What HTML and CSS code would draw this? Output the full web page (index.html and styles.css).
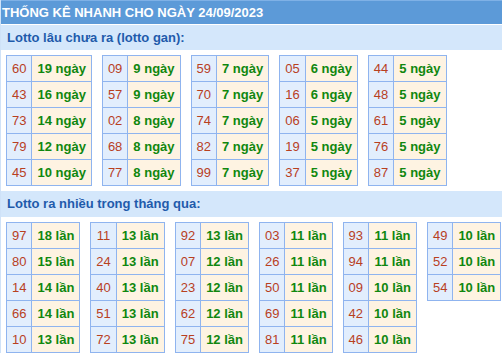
FILE: index.html
```html
<!DOCTYPE html>
<html lang="vi">
<head>
<meta charset="utf-8">
<title>Thống kê nhanh</title>
<link rel="stylesheet" href="styles.css">
</head>
<body>
<div class="box">
  <div class="title">THỐNG KÊ NHANH CHO NGÀY 24/09/2023</div>
  <div class="sec">Lotto lâu chưa ra (lotto gan):</div>
  <div class="tables">
    <table><tr><td class="n">60</td><td class="v">19 ngày</td></tr><tr><td class="n">43</td><td class="v">16 ngày</td></tr><tr><td class="n">73</td><td class="v">14 ngày</td></tr><tr><td class="n">79</td><td class="v">12 ngày</td></tr><tr><td class="n">45</td><td class="v">10 ngày</td></tr></table>
    <table><tr><td class="n">09</td><td class="v">9 ngày</td></tr><tr><td class="n">57</td><td class="v">9 ngày</td></tr><tr><td class="n">02</td><td class="v">8 ngày</td></tr><tr><td class="n">68</td><td class="v">8 ngày</td></tr><tr><td class="n">77</td><td class="v">8 ngày</td></tr></table>
    <table><tr><td class="n">59</td><td class="v">7 ngày</td></tr><tr><td class="n">70</td><td class="v">7 ngày</td></tr><tr><td class="n">74</td><td class="v">7 ngày</td></tr><tr><td class="n">82</td><td class="v">7 ngày</td></tr><tr><td class="n">99</td><td class="v">7 ngày</td></tr></table>
    <table><tr><td class="n">05</td><td class="v">6 ngày</td></tr><tr><td class="n">16</td><td class="v">6 ngày</td></tr><tr><td class="n">06</td><td class="v">5 ngày</td></tr><tr><td class="n">19</td><td class="v">5 ngày</td></tr><tr><td class="n">37</td><td class="v">5 ngày</td></tr></table>
    <table><tr><td class="n">44</td><td class="v">5 ngày</td></tr><tr><td class="n">48</td><td class="v">5 ngày</td></tr><tr><td class="n">61</td><td class="v">5 ngày</td></tr><tr><td class="n">76</td><td class="v">5 ngày</td></tr><tr><td class="n">87</td><td class="v">5 ngày</td></tr></table>
  </div>
  <div class="sec sec2">Lotto ra nhiều trong tháng qua:</div>
  <div class="tables">
    <table><tr><td class="n">97</td><td class="v">18 lần</td></tr><tr><td class="n">80</td><td class="v">15 lần</td></tr><tr><td class="n">14</td><td class="v">14 lần</td></tr><tr><td class="n">66</td><td class="v">14 lần</td></tr><tr><td class="n">10</td><td class="v">13 lần</td></tr></table>
    <table><tr><td class="n">11</td><td class="v">13 lần</td></tr><tr><td class="n">24</td><td class="v">13 lần</td></tr><tr><td class="n">40</td><td class="v">13 lần</td></tr><tr><td class="n">51</td><td class="v">13 lần</td></tr><tr><td class="n">72</td><td class="v">13 lần</td></tr></table>
    <table><tr><td class="n">92</td><td class="v">13 lần</td></tr><tr><td class="n">07</td><td class="v">12 lần</td></tr><tr><td class="n">23</td><td class="v">12 lần</td></tr><tr><td class="n">62</td><td class="v">12 lần</td></tr><tr><td class="n">75</td><td class="v">12 lần</td></tr></table>
    <table><tr><td class="n">03</td><td class="v">11 lần</td></tr><tr><td class="n">26</td><td class="v">11 lần</td></tr><tr><td class="n">50</td><td class="v">11 lần</td></tr><tr><td class="n">69</td><td class="v">11 lần</td></tr><tr><td class="n">81</td><td class="v">11 lần</td></tr></table>
    <table><tr><td class="n">93</td><td class="v">11 lần</td></tr><tr><td class="n">94</td><td class="v">11 lần</td></tr><tr><td class="n">09</td><td class="v">10 lần</td></tr><tr><td class="n">42</td><td class="v">10 lần</td></tr><tr><td class="n">46</td><td class="v">10 lần</td></tr></table>
    <table><tr><td class="n">49</td><td class="v">10 lần</td></tr><tr><td class="n">52</td><td class="v">10 lần</td></tr><tr><td class="n">54</td><td class="v">10 lần</td></tr></table>
  </div>
</div>
</body>
</html>
```

FILE: styles.css
```css
html, body {
  margin: 0;
  padding: 0;
  background: #ffffff;
}
body {
  font-family: "Liberation Sans", Arial, sans-serif;
  font-size: 13px;
}
.box {
  width: 501px;
  border-left: 1px solid #cfe2f8;
  height: 353px;
  overflow: hidden;
}
.title {
  background: #5c9ad8;
  color: #ffffff;
  font-weight: bold;
  font-size: 13px;
  height: 24px;
  line-height: 23px;
  padding-left: 2px;
  margin-left: -1px;
  border-top: 1px solid #7fb1e6;
  box-sizing: border-box;
}
.sec {
  background: #d4e7fb;
  color: #1f5bab;
  font-weight: bold;
  font-size: 13px;
  height: 25px;
  line-height: 25px;
  padding-left: 6px;
  margin-top: 1px;
}
.sec2 {
  margin-top: 5px;
  height: 26px;
  line-height: 26px;
}
.tables {
  display: flex;
  align-items: flex-start;
  gap: 10px;
  padding: 5px 0 0 5px;
}
table {
  border-collapse: collapse;
  border: 1px solid #8fb4ef;
}
td {
  border: 1px solid #8fb4ef;
  height: 26px;
  padding: 0 5px;
  text-align: center;
  white-space: nowrap;
  box-sizing: border-box;
  font-size: 13px;
}
td.n {
  background: #e2eefd;
  color: #b8401f;
}
td.v {
  background: #fef3e2;
  color: #10870f;
  font-weight: bold;
}
```
